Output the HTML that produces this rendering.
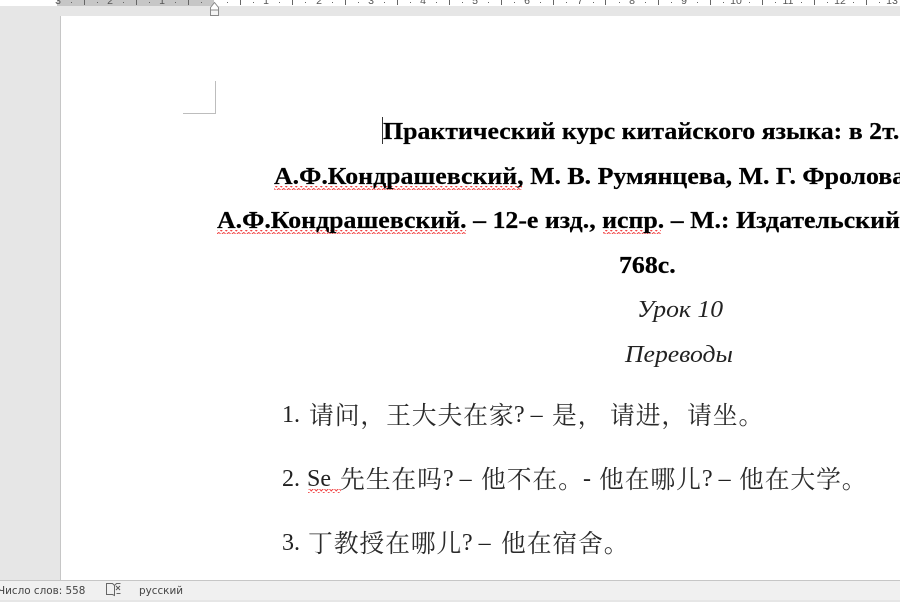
<!DOCTYPE html>
<html lang="ru"><head><meta charset="utf-8"><title>Документ</title>
<style>
html,body{margin:0;padding:0;width:900px;height:600px;overflow:hidden;background:#e6e6e6}
*{box-sizing:border-box}
#page{position:absolute;left:60px;top:16px;width:840px;height:564px;background:#fff;border-left:1px solid #c6c6c6}
#ruler{position:absolute;left:0;top:0;width:900px;height:6px;background:#fff;overflow:hidden}
#rgrey{position:absolute;left:57px;top:0;width:157px;height:6px;background:#c6c6c6}
.n{position:absolute;top:-4px;width:16px;margin-left:-8px;text-align:center;font:10.5px/10px "Liberation Sans",sans-serif;color:#555}
.t{position:absolute;white-space:nowrap;color:#111;font-family:"Liberation Serif","Noto Serif CJK SC",serif;line-height:30px;transform-origin:0 50%;margin-top:1px}
.b{font-weight:bold;font-size:24px;color:#000;transform:scaleX(1.077);-webkit-text-stroke:.2px #000}
.i{font-style:italic;font-size:24px;color:#222;transform:scaleX(1.07)}
.l{font-size:24px;color:#222}
.c{font-family:"Noto Serif CJK SC",serif;font-size:24.8px;letter-spacing:.9px;font-weight:400;color:#2a2a2a}
#st{position:absolute;left:0;top:580px;width:900px;height:20px;background:#f0f0f0;border-top:1px solid #c6c6c6;font:10.4px/21px "DejaVu Sans","Liberation Sans",sans-serif;color:#444}
svg{position:absolute;left:0;top:0}
</style></head><body>
<div id="page"></div>
<div id="ruler"><div id="rgrey"></div>
<div class="n" style="left:58px">3</div><div class="n" style="left:110px">2</div><div class="n" style="left:162px">1</div>
<div class="n" style="left:266px">1</div><div class="n" style="left:319px">2</div><div class="n" style="left:371px">3</div><div class="n" style="left:423px">4</div><div class="n" style="left:475px">5</div><div class="n" style="left:527px">6</div><div class="n" style="left:580px">7</div><div class="n" style="left:632px">8</div><div class="n" style="left:684px">9</div><div class="n" style="left:736px">10</div><div class="n" style="left:788px">11</div><div class="n" style="left:840px">12</div><div class="n" style="left:892px">13</div></div>
<svg width="900" height="600" viewBox="0 0 900 600" fill="none">
<g stroke="#666" stroke-width="1">
<path d="M84.5 0V5M136.5 0V5M188.5 0V5M240.5 0V5M292.5 0V5M345.5 0V5M397.5 0V5M449.5 0V5M501.5 0V5M553.5 0V5M605.5 0V5M658.5 0V5M710.5 0V5M762.5 0V5M814.5 0V5M866.5 0V5"/>
</g>
<g fill="#666">
<rect x="71" y="2" width="1" height="1"/><rect x="97" y="2" width="1" height="1"/><rect x="123" y="2" width="1" height="1"/><rect x="149" y="2" width="1" height="1"/><rect x="175" y="2" width="1" height="1"/><rect x="201" y="2" width="1" height="1"/><rect x="227" y="2" width="1" height="1"/><rect x="253" y="2" width="1" height="1"/><rect x="279" y="2" width="1" height="1"/><rect x="305" y="2" width="1" height="1"/><rect x="332" y="2" width="1" height="1"/><rect x="358" y="2" width="1" height="1"/><rect x="384" y="2" width="1" height="1"/><rect x="410" y="2" width="1" height="1"/><rect x="436" y="2" width="1" height="1"/><rect x="462" y="2" width="1" height="1"/><rect x="488" y="2" width="1" height="1"/><rect x="514" y="2" width="1" height="1"/><rect x="540" y="2" width="1" height="1"/><rect x="566" y="2" width="1" height="1"/><rect x="593" y="2" width="1" height="1"/><rect x="619" y="2" width="1" height="1"/><rect x="645" y="2" width="1" height="1"/><rect x="671" y="2" width="1" height="1"/><rect x="697" y="2" width="1" height="1"/><rect x="723" y="2" width="1" height="1"/><rect x="749" y="2" width="1" height="1"/><rect x="775" y="2" width="1" height="1"/><rect x="801" y="2" width="1" height="1"/><rect x="827" y="2" width="1" height="1"/><rect x="853" y="2" width="1" height="1"/><rect x="879" y="2" width="1" height="1"/>
</g>
<path d="M210.5 15.5V7.5L214.5 2.5L218.5 7.5V15.5Z" fill="#fff" stroke="#8a8a8a"/>
<path d="M210.5 10V15.5H218.5V10Z" fill="#f4f4f4" stroke="#8a8a8a"/>
<path d="M183 113.5H215.5V81" stroke="#bdbdbd" stroke-width="1"/>
<path d="M382.5 117V144" stroke="#333" stroke-width="1"/>
<defs><pattern id="w" width="5" height="4" patternUnits="userSpaceOnUse"><path d="M0 1.5L1.25 3L2.5 1.5L3.75 0.5L5 1.5" stroke="#f04040" stroke-width="1" fill="none"/></pattern></defs>
<rect x="274" y="186" width="248" height="4" fill="url(#w)"/>
<rect x="217" y="230" width="249" height="4" fill="url(#w)"/>
<rect x="603" y="230" width="58" height="4" fill="url(#w)"/>
<rect x="308" y="489" width="33" height="4" fill="url(#w)"/>
</svg>
<div class="t b" style="left:383px;top:116px">Практический курс китайского языка: в 2т.</div>
<div class="t b" style="left:274px;top:161px">А.Ф.Кондрашевский, М. В. Румянцева, М. Г. Фролова</div>
<div class="t b" style="left:217px;top:205px">А.Ф.Кондрашевский. – 12-е изд., испр. – М.: Издательский</div>
<div class="t b" style="left:619px;top:250px">768с.</div>
<div class="t i" style="left:637px;top:294px">Урок 10</div>
<div class="t i" style="left:625px;top:339px">Переводы</div>

<div class="t l" style="left:282px;top:399px">1.</div>
<div class="t c" style="left:309px;top:398px">请问，王大夫在家</div>
<div class="t l" style="left:514px;top:399px">? –</div>
<div class="t c" style="left:552px;top:398px">是，</div>
<div class="t c" style="left:610px;top:398px">请进，请坐。</div>

<div class="t l" style="left:282px;top:463px">2.</div>
<div class="t l" style="left:307px;top:463px">Se</div>
<div class="t c" style="left:340px;top:462px">先生在吗</div>
<div class="t l" style="left:443px;top:463px">? –</div>
<div class="t c" style="left:481px;top:462px">他不在。</div>
<div class="t l" style="left:583px;top:463px">-</div>
<div class="t c" style="left:599px;top:462px">他在哪儿</div>
<div class="t l" style="left:702px;top:463px">? –</div>
<div class="t c" style="left:739px;top:462px">他在大学。</div>

<div class="t l" style="left:282px;top:527px">3.</div>
<div class="t c" style="left:308px;top:526px">丁教授在哪儿</div>
<div class="t l" style="left:462px;top:527px">? –</div>
<div class="t c" style="left:501px;top:526px">他在宿舍。</div>

<div id="st"><span style="position:absolute;left:-2px;top:0;white-space:nowrap">Число слов: 558</span><span style="position:absolute;left:139px;top:0;white-space:nowrap">русский</span></div>
<svg width="900" height="600" viewBox="0 0 900 600" fill="none" style="pointer-events:none">
<g stroke="#666" stroke-width="1" transform="translate(0,580)">
<path d="M106.5 3.5H112.5L114.5 5.5V15.5L112.5 14.5H106.5Z"/><path d="M114.5 5.5L116.5 3.5H120.5"/>
<path d="M116 6L120 10M120 6L116 10" stroke="#555"/><path d="M116.5 13.5H120.5"/>
</g>
</svg>
</body></html>
